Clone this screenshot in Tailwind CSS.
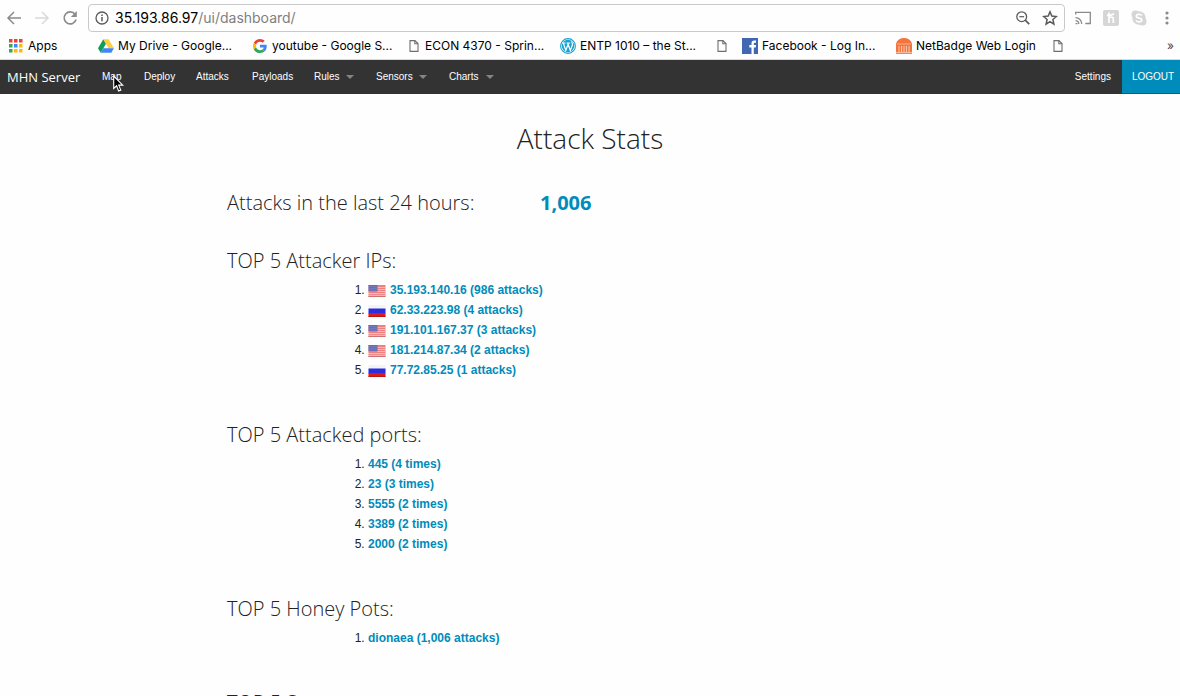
<!DOCTYPE html>
<html lang="en">
<head>
<meta charset="utf-8">
<title>MHN Server</title>
<script src="https://cdn.jsdelivr.net/npm/@tailwindcss/browser@4"></script>
</head>
<body class="h-screen overflow-hidden flex flex-col bg-[#fefefe] text-[#222222]">
<svg class="hidden">
  <symbol id="page" viewBox="0 0 10 12"><path d="M1 .6h5l3 3v7.8H1zM5.8.8v3h3" fill="none" stroke="#6e6e6e" stroke-width="1.1"/></symbol>
  <symbol id="us" viewBox="0 0 17 12"><rect width="17" height="12" fill="#ef8080"/><path d="M0 2.5h17M0 4.500h17M0 6.500h17M0 8.500h17M0 10.300h17" stroke="#f8d4d4" stroke-width=".7"/><rect width="9" height="6.500" fill="#6468b4"/><path d="M1 1.500h7M1 3.300h7M1 5h7" stroke="#a9abd8" stroke-width=".6" stroke-dasharray="1 1"/><path d="M0 11.500h17" stroke="#d07070"/></symbol>
  <symbol id="ru" viewBox="0 0 17 12"><rect width="17" height="12" fill="#f4f4f4"/><rect y="3.500" width="17" height="5" fill="#2d2de0"/><rect y="8" width="17" height="4" fill="#e01818"/><path d="M0 11.600h17" stroke="#b01414" stroke-width=".8"/></symbol>
</svg>

<header class="font-[Inter,sans-serif] border-b border-[#d4dad9] text-black">
  <div class="flex items-center h-9 pl-1.5 pr-[5px]">
    <button aria-label="Back" class="w-7"><svg class="w-4 h-4" viewBox="0 0 16 16" fill="none" stroke="#8b8b8b" stroke-width="1.5"><path d="M15 8H2M8 2L2 8l6 6"/></svg></button>
    <button aria-label="Forward" class="w-7"><svg class="w-4 h-4" viewBox="0 0 16 16" fill="none" stroke="#d9d9d9" stroke-width="1.5"><path d="M1 8h13M8 2l6 6-6 6"/></svg></button>
    <button aria-label="Reload" class="w-6.5"><svg class="w-4 h-4" viewBox="0 0 16 16"><path d="M13 4.3A6 6 0 1 0 14 9.500" fill="none" stroke="#8b8b8b" stroke-width="1.7"/><path d="M14.800 1v6H8.800z" fill="#8b8b8b"/></svg></button>
    <div class="flex flex-1 items-center h-7 border border-[#c9c9c9] rounded-[4px] px-1.5">
      <svg class="w-3.5 h-3.5 mr-1.5" viewBox="0 0 14 14"><circle cx="7" cy="7" r="6" fill="none" stroke="#5a5a5a" stroke-width="1.3"/><path d="M7 6v4.300M7 3.400v1.500" stroke="#5a5a5a" stroke-width="1.5"/></svg>
      <div class="flex-1 text-sm text-[#808080]"><span class="text-black">35.193.86.97</span>/ui/dashboard/</div>
      <button aria-label="Zoom" class="mr-[11px]"><svg class="block w-4 h-4" viewBox="0 0 16 16" fill="none" stroke="#5a5a5a"><circle cx="6.700" cy="6.700" r="4.900" stroke-width="1.300"/><path d="M4.300 6.700h4.800" stroke-width="1.200"/><path d="M10.200 10.200l4 4" stroke-width="1.700"/></svg></button>
      <button aria-label="Bookmark this page"><svg class="block w-4 h-4" viewBox="0 0 16 16" fill="none" stroke="#5a5a5a" stroke-width="1.500"><path d="M8 1.800l1.800 4.300 4.600.4-3.500 3 1 4.600L8 11.700l-3.900 2.400 1-4.600-3.500-3 4.600-.4z"/></svg></button>
    </div>
    <div class="flex items-center gap-3 pl-2.5">
      <svg class="w-4 h-4" viewBox="0 0 16 16" fill="none" stroke="#8b8b8b" stroke-width="1.300"><path d="M.7 4.500V2.300h14.600v11.200h-5M.5 13.600h2M.5 10.600a3.200 3.200 0 0 1 3.300 3.300M.5 7.700a6 6 0 0 1 6.200 6.200"/></svg>
      <svg class="w-4 h-4" viewBox="0 0 16 16"><rect width="16" height="16" rx="2" fill="#d6d6d6"/><path d="M6 2.500v10.500M6 9q.3-2 2.300-2t2 2v4M4 5.200q4 .8 7-1.400" fill="none" stroke="#fff" stroke-width="1.700"/></svg>
      <svg class="w-4 h-4" viewBox="0 0 16 16"><circle cx="8" cy="8" r="6.700" fill="#d6d6d6"/><circle cx="4.500" cy="4.500" r="4" fill="#d6d6d6"/><circle cx="11.500" cy="11.500" r="4" fill="#d6d6d6"/><path d="M10.800 5.700Q10 4.300 8 4.300 5.300 4.400 5.300 6.100t2.700 2 2.800 2-2.800 1.800Q5.700 11.800 5 10.200" fill="none" stroke="#fff" stroke-width="1.600"/></svg>
      <button aria-label="Menu"><svg class="block w-4 h-4" viewBox="0 0 16 16" fill="#8b8b8b"><circle cx="8" cy="3" r="1.600"/><circle cx="8" cy="8" r="1.600"/><circle cx="8" cy="13" r="1.600"/></svg></button>
    </div>
  </div>
  <nav aria-label="Bookmarks" class="flex items-center h-[23px] pb-1 pl-[9px] pr-1.5 text-xs whitespace-nowrap">
    <a href="#" class="flex items-center gap-[5px] w-[89px]"><svg class="w-3.5 h-3.5 shrink-0" viewBox="0 0 14 14"><path d="M0 0h3.500v3.500H0zM5 0h3.500v3.500H5zM10 0h3.500v3.500H10z" fill="#ea4335"/><path d="M0 5h3.500v3.500H0zM0 10h3.500v3.500H0z" fill="#34a853"/><path d="M5 5h3.500v3.500H5z" fill="#4285f4"/><path d="M10 5h3.500v3.500H10zM5 10h3.500v3.500H5zM10 10h3.500v3.500H10z" fill="#fbbc05"/></svg>Apps</a>
    <a href="#" class="flex items-center gap-1 w-[155px]"><svg class="w-4 h-4 shrink-0" viewBox="0 0 16 16"><path d="M5.300 1.200L0 10.300l2.700 4.500L8 5.700z" fill="#0f9d58"/><path d="M5.300 1.200h5.300l5.300 9.100h-5.300z" fill="#ffcd40"/><path d="M5.400 10.300h10.500l-2.600 4.500H2.700z" fill="#4285f4"/></svg>My Drive - Google...</a>
    <a href="#" class="flex items-center gap-[5px] w-[156px]"><svg class="w-3.5 h-3.5 shrink-0" viewBox="0 0 48 48"><path fill="#ea4335" d="M24 9.500c3.500 0 6.700 1.200 9.200 3.600l6.900-6.900C35.900 2.400 30.500 0 24 0 14.600 0 6.500 5.400 2.600 13.200l8 6.200C12.400 13.700 17.700 9.500 24 9.500z"/><path fill="#4285f4" d="M47 24.500c0-1.600-.2-3.100-.4-4.500H24v9h12.900c-.6 3-2.200 5.500-4.800 7.200l7.700 6C44.400 38 47 31.800 47 24.500z"/><path fill="#fbbc05" d="M10.500 28.600c-.5-1.500-.8-3-.8-4.600s.3-3.100.8-4.600l-8-6.200C.9 16.500 0 20.100 0 24s.9 7.500 2.600 10.800z"/><path fill="#34a853" d="M24 48c6.500 0 11.900-2.100 15.900-5.800l-7.700-6c-2.200 1.500-4.900 2.300-8.200 2.300-6.300 0-11.600-4.200-13.500-9.900l-8 6.200C6.500 42.600 14.600 48 24 48z"/></svg>youtube - Google S...</a>
    <a href="#" class="flex items-center gap-1.5 w-[151px]"><svg class="w-2.5 h-3 shrink-0"><use href="#page"/></svg>ECON 4370 - Sprin...</a>
    <a href="#" class="flex items-center gap-1 w-[157px]"><svg class="w-4 h-4 shrink-0" viewBox="0 0 16 16"><circle cx="8" cy="8" r="7.400" fill="#fff" stroke="#18a0d0" stroke-width="1.100"/><circle cx="8" cy="8" r="6.200" fill="#18a0d0"/><path d="M2 5h3.600M6.600 5h3.600M3.300 5l2.500 7.500L8.200 6M7.700 5l2.600 7.500L12.400 7Q12.600 5 11.500 3.500" fill="none" stroke="#fff" stroke-width="1.200"/></svg>ENTP 1010 – the St...</a>
    <a href="#" aria-label="Page" class="w-[25px]"><svg class="w-2.5 h-3"><use href="#page"/></svg></a>
    <a href="#" class="flex items-center gap-1 w-[154px]"><svg class="w-4 h-4 shrink-0" viewBox="0 0 16 16"><rect width="16" height="16" fill="#4267b2"/><path d="M9.500 16V9.400H7.300V7h2.200V5.200Q9.500 2.500 12.200 2.500H14v2.200h-1.300q-.9 0-.9 1V7H14l-.3 2.400h-1.900V16z" fill="#fff"/></svg>Facebook - Log In...</a>
    <a href="#" class="flex items-center gap-1 w-[157px]"><svg class="w-4 h-4 shrink-0" viewBox="0 0 16 16"><path d="M0 16V5.500Q2 0 8 0t8 5.500V16z" fill="#f4743b"/><path d="M1 6h14" stroke="#fbc4a8" stroke-width=".8"/><path d="M3 8v6M5.600 8v6M8 8v6M10.400 8v6M13 8v6M0 14.700h16" stroke="#fde3d6" stroke-width=".8"/></svg>NetBadge Web Login</a>
    <a href="#" aria-label="Page"><svg class="block w-2.5 h-3"><use href="#page"/></svg></a>
    <button aria-label="More bookmarks" class="ml-auto text-[#444444]">»</button>
  </nav>
</header>

<nav aria-label="Main" class="relative flex items-center h-[34px] pl-[7px] shrink-0 bg-[#333333] text-white font-['Liberation_Sans',Arial,sans-serif] text-[10px] leading-4">
  <a href="#" class="w-[95px] font-['Open_Sans',sans-serif] text-[13px]">MHN Server</a>
  <a href="#" class="w-[42px]">Map</a>
  <a href="#" class="w-[52px]">Deploy</a>
  <a href="#" class="w-14">Attacks</a>
  <a href="#" class="w-[62px]">Payloads</a>
  <button class="flex items-center justify-between w-10">Rules<span class="border-4 border-b-0 border-transparent border-t-[#858585]"></span></button>
  <button class="flex items-center justify-between w-[51px] ml-[22px]">Sensors<span class="border-4 border-b-0 border-transparent border-t-[#858585]"></span></button>
  <button class="flex items-center justify-between w-[45px] ml-[22px]">Charts<span class="border-4 border-b-0 border-transparent border-t-[#858585]"></span></button>
  <a href="#" class="ml-auto mr-[11px]">Settings</a>
  <a href="#" class="flex items-center justify-center self-stretch w-[58px] pl-1 bg-[#008cba] border-b border-[#006687]">LOGOUT</a>
  <svg class="absolute left-[113px] top-[15px] w-3 h-[18px]" viewBox="0 0 12 18"><path d="M.7 1v12.500l2.900-2.700 2 5.200 2.200-.9-2.100-5h4z" fill="#000" stroke="#fff" stroke-width="1.100"/></svg>
</nav>

<main class="w-full max-w-[726px] mx-auto pt-6 font-['Liberation_Sans',Arial,sans-serif] text-xs leading-5">
  <h1 class="text-center font-['Open_Sans',sans-serif] font-light text-[28px] leading-10">Attack Stats</h1>
  <div class="flex mt-[29px] font-['Open_Sans',sans-serif] text-[20px] leading-8">
    <h2 class="w-[313px] font-light">Attacks in the last 24 hours:</h2>
    <a href="#" class="font-bold text-[#008cba]">1,006</a>
  </div>
  <section class="mt-6">
    <h2 class="font-['Open_Sans',sans-serif] font-light text-[20px] leading-9">TOP 5 Attacker IPs:</h2>
    <ol class="list-decimal pl-[141px] pt-px">
      <li><a href="#" class="font-bold text-[#008cba]"><svg class="inline-block align-middle w-[18px] h-3 mr-1"><use href="#us"/></svg>35.193.140.16 (986 attacks)</a></li>
      <li><a href="#" class="font-bold text-[#008cba]"><svg class="inline-block align-middle w-[18px] h-3 mr-1"><use href="#ru"/></svg>62.33.223.98 (4 attacks)</a></li>
      <li><a href="#" class="font-bold text-[#008cba]"><svg class="inline-block align-middle w-[18px] h-3 mr-1"><use href="#us"/></svg>191.101.167.37 (3 attacks)</a></li>
      <li><a href="#" class="font-bold text-[#008cba]"><svg class="inline-block align-middle w-[18px] h-3 mr-1"><use href="#us"/></svg>181.214.87.34 (2 attacks)</a></li>
      <li><a href="#" class="font-bold text-[#008cba]"><svg class="inline-block align-middle w-[18px] h-3 mr-1"><use href="#ru"/></svg>77.72.85.25 (1 attacks)</a></li>
    </ol>
  </section>
  <section class="mt-[37px]">
    <h2 class="font-['Open_Sans',sans-serif] font-light text-[20px] leading-9">TOP 5 Attacked ports:</h2>
    <ol class="list-decimal pl-[141px] pt-px">
      <li><a href="#" class="font-bold text-[#008cba]">445 (4 times)</a></li>
      <li><a href="#" class="font-bold text-[#008cba]">23 (3 times)</a></li>
      <li><a href="#" class="font-bold text-[#008cba]">5555 (2 times)</a></li>
      <li><a href="#" class="font-bold text-[#008cba]">3389 (2 times)</a></li>
      <li><a href="#" class="font-bold text-[#008cba]">2000 (2 times)</a></li>
    </ol>
  </section>
  <section class="mt-[37px]">
    <h2 class="font-['Open_Sans',sans-serif] font-light text-[20px] leading-9">TOP 5 Honey Pots:</h2>
    <ol class="list-decimal pl-[141px] pt-px">
      <li><a href="#" class="font-bold text-[#008cba]">dionaea (1,006 attacks)</a></li>
    </ol>
  </section>
  <section class="mt-[37px]">
    <h2 class="font-['Open_Sans',sans-serif] font-light text-[20px] leading-9">TOP 5 Sensors:</h2>
  </section>
</main>
</body>
</html>
